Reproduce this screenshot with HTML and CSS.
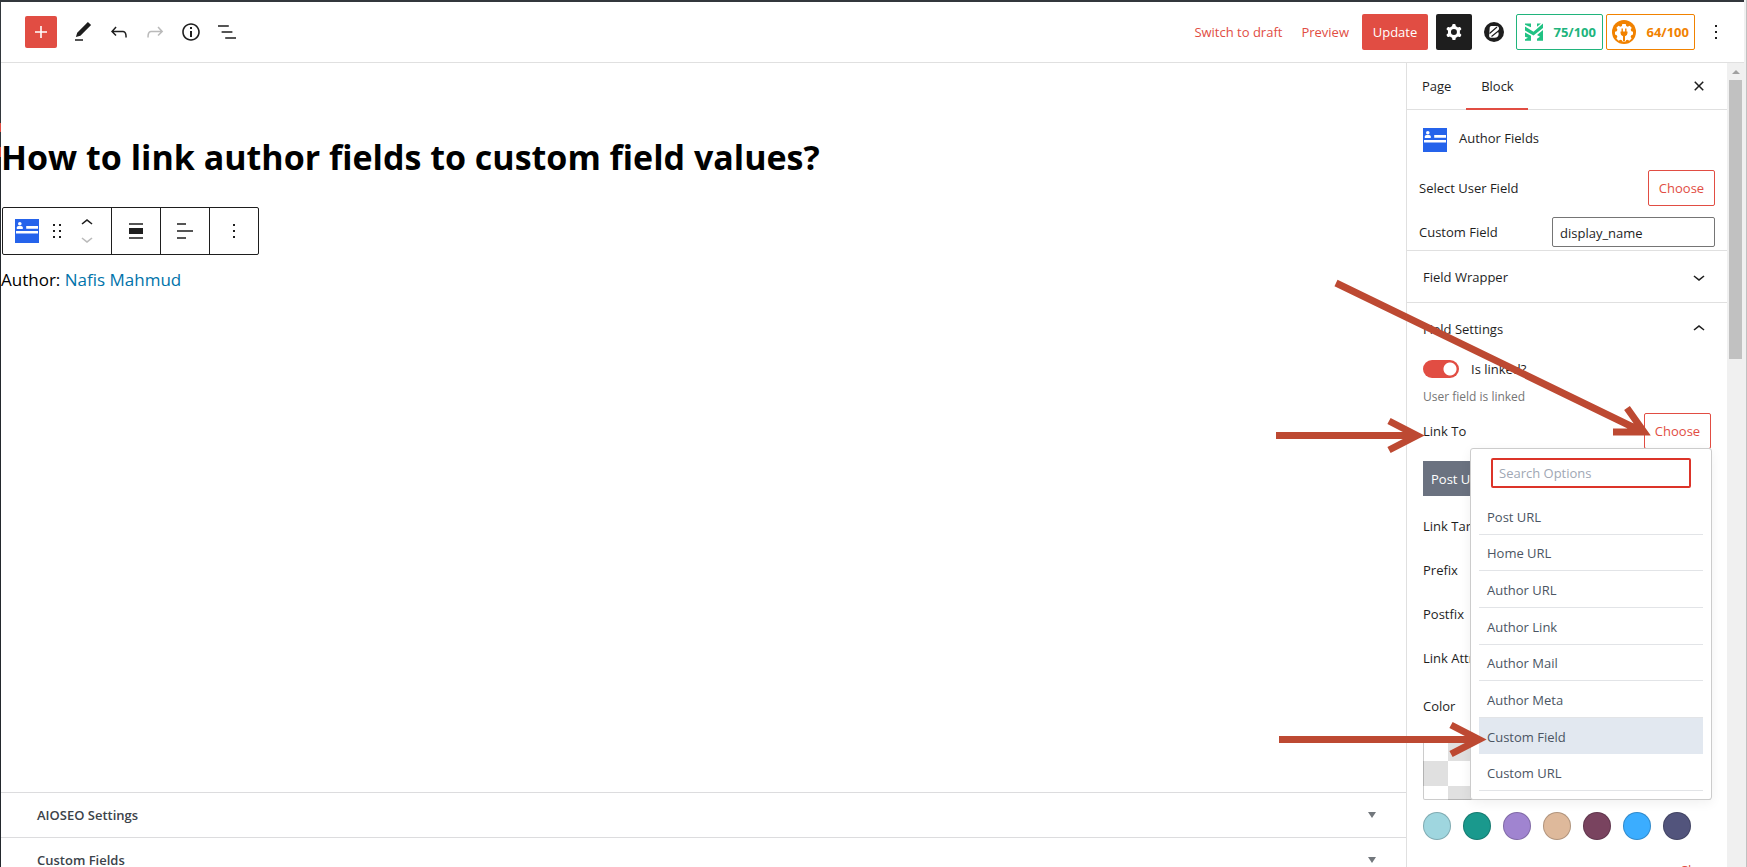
FILE: index.html
```html
<!DOCTYPE html>
<html lang="en">
<head>
<meta charset="utf-8">
<title>Edit Page</title>
<link rel="stylesheet" href="styles.css">
</head>
<body>
<svg class="defs" aria-hidden="true">
  <symbol id="more" viewBox="0 0 24 24"><path d="M13 19h-2v-2h2v2zm0-6h-2v-2h2v2zm0-6h-2V5h2v2z"/></symbol>
  <symbol id="up" viewBox="0 0 24 24"><path d="M6.5 12.4L12 8l5.5 4.4-.9 1.2L12 10l-4.5 3.6-1-1.2z"/></symbol>
  <symbol id="down" viewBox="0 0 24 24"><path d="M17.5 11.6L12 16l-5.5-4.4.9-1.2L12 14l4.5-3.6 1 1.2z"/></symbol>
  <symbol id="author" viewBox="0 0 24 24">
    <path fill="#2563eb" d="M0 0h24v24H0z"/>
    <g fill="#fff"><circle cx="4.8" cy="4.8" r="1.8"/><path d="M1.8 10V8.600q0-1.600 1.600-1.600h2.800q1.600 0 1.600 1.600V10z"/><path d="M11.200 7H23v2.800H11.200zM1 11.900h22v2.500H1z"/></g>
  </symbol>
</svg>
<div class="app">
  <div class="edge"></div>
  <div class="editor">
    <header class="topbar">
      <div class="tools">
        <button class="add" aria-label="Add block"><svg viewBox="0 0 24 24"><path d="M18 11.200h-5.200V6h-1.600v5.200H6v1.600h5.200V18h1.600v-5.200H18z"/></svg></button>
        <button class="tool" aria-label="Tools"><svg viewBox="0 0 24 24"><path d="M20.100 5.100L16.900 2 6.200 12.700l-1.300 4.400 4.500-1.300L20.100 5.100zM4 20.800h8v-1.500H4v1.500z"/></svg></button>
        <button class="tool" aria-label="Undo"><svg viewBox="0 0 24 24"><path d="M18.300 11.700c-.6-.6-1.400-.9-2.300-.9H6.700l2.900-3.300-1.100-1-4.500 5L8.500 16l1-1-2.700-2.700H16c.5 0 .9.2 1.300.5 1 1 1 3.400 1 4.500v.3h1.500v-.2c0-1.500 0-4.300-1.500-5.700z"/></svg></button>
        <button class="tool faded" aria-label="Redo" disabled><svg viewBox="0 0 24 24"><path d="M15.600 6.500l-1.100 1 2.900 3.300H8c-.9 0-1.700.3-2.300.9-1.400 1.500-1.400 4.200-1.400 5.600v.2h1.500v-.3c0-1.100 0-3.500 1-4.500.3-.3.7-.5 1.300-.5h9.200L14.500 15l1.100 1.100 4.600-4.600-4.600-5z"/></svg></button>
        <button class="tool" aria-label="Details"><svg viewBox="0 0 24 24"><path d="M12 3.200c-4.800 0-8.800 3.900-8.800 8.800 0 4.800 3.900 8.800 8.800 8.800 4.800 0 8.800-3.900 8.800-8.800 0-4.800-4-8.800-8.800-8.800zm0 16c-4 0-7.200-3.300-7.200-7.200C4.800 8 8 4.800 12 4.800s7.200 3.300 7.200 7.200c0 4-3.200 7.200-7.200 7.200zM11 17h2v-6h-2v6zm0-8h2V7h-2v2z"/></svg></button>
        <button class="tool" aria-label="List view"><svg viewBox="0 0 24 24"><path d="M13.800 5.200H3v1.500h10.800V5.200zm-3.600 12v1.500H21v-1.500H10.200zm7.200-6H6.600v1.500h10.800v-1.500z"/></svg></button>
      </div>
      <div class="actions">
        <button class="plain">Switch to draft</button>
        <button class="plain">Preview</button>
        <button class="update">Update</button>
        <button class="gear" aria-label="Settings"><svg viewBox="0 0 24 24"><path fill-rule="evenodd" d="M10.289 4.836A1 1 0 0111.275 4h1.306a1 1 0 01.987.836l.244 1.466c.787.26 1.503.679 2.108 1.218l1.393-.522a1 1 0 011.216.437l.653 1.130a1 1 0 01-.23 1.273l-1.148.944a6.025 6.025 0 010 2.435l1.149.946a1 1 0 01.23 1.272l-.653 1.130a1 1 0 01-1.216.437l-1.394-.522c-.605.54-1.320.958-2.108 1.218l-.244 1.466a1 1 0 01-.987.836h-1.306a1 1 0 01-.986-.836l-.244-1.466a5.995 5.995 0 01-2.108-1.218l-1.394.522a1 1 0 01-1.217-.436l-.653-1.131a1 1 0 01.23-1.272l1.149-.946a6.026 6.026 0 010-2.435l-1.148-.944a1 1 0 01-.23-1.272l.653-1.131a1 1 0 011.217-.437l1.393.522a5.994 5.994 0 012.108-1.218l.244-1.466zM14.929 12a3 3 0 11-6 0 3 3 0 016 0z"/></svg></button>
        <button class="blocks" aria-label="Blocks plugin"><svg viewBox="0 0 20 20"><circle cx="10" cy="10" r="10" fill="#1e1e1e"/><path fill="#fff" d="M7.300 4h5q2.900 0 2.700 2.700-.1 1.900-1.500 2.700 1.300.7 1.200 2.300-.2 4.100-4.200 4.100H6.700q-1.700 0-1.600-1.700L5.700 5.600Q5.900 4 7.300 4z"/><path fill="none" stroke="#1e1e1e" stroke-width="1.200" d="M5.500 11.500L13 5M7.500 14.500L15 8.500"/></svg></button>
        <button class="score green"><svg viewBox="0 0 18 18"><path fill="#20c283" d="M0 .5h6v3.700L0 1.800zM0 3.500l8.500 5.300L18 .5V5L8.500 12.500 0 7.500zM12 .5h4L12 3.800zM0 9.500l6 3.200v5H0v-1.500l3-1.500-3-1zM12 12l6-5v10.700h-6v-2l3-2z"/></svg>75/100</button>
        <button class="score orange"><svg viewBox="0 0 24 24"><circle cx="12" cy="12" r="12" fill="#f18200"/><path fill="#fff" d="M10.300 4h3.400l.5 2 1.500.7 1.900-1 2.100 2.100-1 1.900.7 1.500 1.600.6v2.600l-1.700.8-.7 1.500 1 1.900-2.200 2.100-1.900-1-1.500.6-.4 1.200h-3.200l-.5-1.200-1.500-.6-1.900 1-2.100-2.100 1-1.900-.7-1.500-1.700-.8v-2.600l1.700-.6.7-1.500-1-1.900 2.100-2.100 1.900 1 1.500-.7z"/><path fill="#f18200" d="M9.500 8.500h1.400v3h2.200v-3h1.400v3h1v1.500q0 2.600-2.500 3.200V21h-2v-4.800Q8.500 15.600 8.500 13v-1.500h1z"/></svg>64/100</button>
        <button class="options" aria-label="Options"><svg><use href="#more"/></svg></button>
      </div>
    </header>
    <div class="body">
      <main class="canvas">
        <h1 class="title">How to link author fields to custom field values?</h1>
        <div class="toolbar">
          <div class="group first">
            <button aria-label="Author Fields"><svg><use href="#author"/></svg></button>
            <button class="drag" aria-label="Drag"><svg viewBox="0 0 24 24"><path d="M8 7h2V5H8v2zm0 6h2v-2H8v2zm0 6h2v-2H8v2zm6-14v2h2V5h-2zm0 8h2v-2h-2v2zm0 6h2v-2h-2v2z"/></svg></button>
            <div class="movers">
              <button aria-label="Move up"><svg><use href="#up"/></svg></button>
              <button class="faded" aria-label="Move down" disabled><svg><use href="#down"/></svg></button>
            </div>
          </div>
          <div class="group"><button aria-label="Align"><svg viewBox="0 0 24 24"><path d="M5 9h14v6H5z"/><path fill="#555" d="M5 4h14v2H5zM5 18h14v2H5z"/></svg></button></div>
          <div class="group"><button aria-label="Align text"><svg viewBox="0 0 24 24"><path fill="#555" d="M4 4h9v2H4zM4 11h16v2H4zM4 18h9v2H4z"/></svg></button></div>
          <div class="group"><button aria-label="Options"><svg><use href="#more"/></svg></button></div>
        </div>
        <p class="byline">Author: <a href="#">Nafis Mahmud</a></p>
        <section class="meta">
          <button>AIOSEO Settings<i class="caret"></i></button>
          <button>Custom Fields<i class="caret"></i></button>
        </section>
      </main>
      <aside class="sidebar">
        <nav class="tabs">
          <button>Page</button>
          <button class="active">Block</button>
          <button class="close" aria-label="Close settings"><svg viewBox="0 0 24 24"><path d="M12 13.060l3.712 3.713 1.061-1.060L13.061 12l3.712-3.712-1.060-1.060L12 10.938 8.288 7.227l-1.061 1.060L10.939 12l-3.712 3.712 1.060 1.061L12 13.061z"/></svg></button>
        </nav>
        <div class="card"><svg><use href="#author"/></svg><h2>Author Fields</h2></div>
        <div class="source">
          <div class="row user"><span>Select User Field</span><button class="choose">Choose</button></div>
          <div class="row"><label for="cf">Custom Field</label><input class="text" id="cf" value="display_name"></div>
        </div>
        <button class="panel-head">Field Wrapper<svg><use href="#down"/></svg></button>
        <button class="panel-head">Field Settings<svg><use href="#up"/></svg></button>
        <div class="panel">
          <div class="switch"><input type="checkbox" id="linked" checked><label for="linked">Is linked?</label></div>
          <p class="help">User field is linked</p>
          <div class="row link-to">
            <span>Link To</span><button class="choose">Choose</button>
            <div class="popover">
              <input class="search" placeholder="Search Options" aria-label="Search Options">
              <div class="options-list">
                <button>Post URL</button>
                <button>Home URL</button>
                <button>Author URL</button>
                <button>Author Link</button>
                <button>Author Mail</button>
                <button>Author Meta</button>
                <button class="hover">Custom Field</button>
                <button>Custom URL</button>
              </div>
            </div>
          </div>
          <div class="chip">Post URL</div>
          <div class="row field"><label for="target">Link Target</label><select class="text" id="target"></select></div>
          <div class="row field"><label for="prefix">Prefix</label><input class="text" id="prefix"></div>
          <div class="row field"><label for="postfix">Postfix</label><input class="text" id="postfix"></div>
          <div class="row field"><label for="attrs">Link Attributes</label><input class="text" id="attrs"></div>
          <div class="row color">Color</div>
          <button class="checker" aria-label="Custom color"></button>
          <div class="swatches">
            <button class="c1" aria-label="Light blue"></button>
            <button class="c2" aria-label="Teal"></button>
            <button class="c3" aria-label="Purple"></button>
            <button class="c4" aria-label="Tan"></button>
            <button class="c5" aria-label="Plum"></button>
            <button class="c6" aria-label="Sky blue"></button>
            <button class="c7" aria-label="Indigo"></button>
          </div>
          <button class="clear">Clear</button>
        </div>
      </aside>
      <div class="scroll"><i class="arrow"></i><i class="thumb"></i></div>
    </div>
  </div>
  <div class="outer-scroll"></div>
  <svg class="arrows" viewBox="0 0 480 520" aria-hidden="true">
    <g fill="none" stroke="#bd4932" stroke-width="7">
      <path d="M69 33L376 182M360 158L377 182H346"/>
      <path d="M9 185.500H149M122 171L150 185.500L122 200"/>
      <path d="M12 489.500H211M184 475L212 489.500L184 504"/>
    </g>
  </svg>
</div>
</body>
</html>
```
FILE: styles.css
```css
* { box-sizing: border-box; }
body {
  margin: 0;
  overflow: hidden;
  background: #fff;
  color: #1e1e1e;
  font: 13px/20px "Open Sans", "Noto Sans", sans-serif;
}
button, input, select { font: inherit; color: inherit; }
button { margin: 0; padding: 0; border: 0; background: none; cursor: pointer; }
svg { display: block; width: 24px; height: 24px; fill: currentColor; flex: none; }
.defs { display: none; }
h1, h2, p { margin: 0; }

.app {
  position: relative;
  display: flex;
  height: 100vh;
  overflow: hidden;
}
.app::before {
  content: "";
  position: absolute;
  inset: 0 3px auto 0;
  height: 2px;
  background: #32373c;
}
.edge {
  width: 1px;
  background: linear-gradient(#32373c 123px, #e14d43 123px, #e14d43 132px, #32373c 132px, #32373c 147px, #e14d43 147px, #e14d43 157px, #23282d 157px);
}
.editor { flex: 1; min-width: 0; display: flex; flex-direction: column; padding-top: 2px; }
.outer-scroll { width: 3px; background: #f0f0f0; border-right: 1px solid #c1c1c1; }

.topbar {
  display: flex;
  justify-content: space-between;
  align-items: center;
  flex: none;
  height: 61px;
  padding: 0 16px 0 24px;
  border-bottom: 1px solid #e0e0e0;
}
.tools { display: flex; align-items: center; gap: 12px; }
.add { width: 32px; height: 32px; margin-right: 2px; padding: 4px; border-radius: 2px; background: #e14d43; color: #fff; }
.faded { opacity: .3; }
.actions { display: flex; align-items: center; height: 36px; }
.plain { color: #e14d43; margin-right: 19px; }
.update { width: 66px; height: 36px; margin: 0 8px 0 -6px; border-radius: 2px; background: #e14d43; color: #fff; }
.gear { width: 36px; height: 36px; padding: 6px; border-radius: 2px; background: #1e1e1e; color: #fff; }
.blocks { margin: 0 12px; }
.blocks svg { width: 20px; height: 20px; }
.score {
  display: flex;
  align-items: center;
  justify-content: space-between;
  height: 36px;
  border: 1px solid;
  border-radius: 2px;
  font-weight: 700;
}
.green { width: 87px; padding: 0 6px 0 8px; color: #20b47c; }
.green svg { width: 18px; height: 18px; }
.orange { width: 89px; margin-left: 3px; padding: 0 5px; color: #f18200; }
.options { margin-left: 9px; }

.body { flex: 1; min-height: 0; display: flex; }
.canvas { flex: 1; min-width: 0; display: flex; flex-direction: column; padding-top: 68px; }
.title { font-size: 34px; line-height: 52px; font-weight: 700; color: #000; white-space: nowrap; }
.toolbar {
  display: flex;
  align-self: flex-start;
  height: 48px;
  margin: 24px 0 0 1px;
  border: 1px solid #1e1e1e;
  border-radius: 2px;
}
.group { display: flex; align-items: center; justify-content: center; width: 49px; border-left: 1px solid #1e1e1e; }
.group.first { width: 108px; border: 0; }
.drag { margin-left: 6px; }
.movers { margin-left: 6px; }
.movers button { display: block; height: 16px; }
.movers svg { margin-top: -4px; }
.byline { margin-top: 10px; font-size: 17px; line-height: 30px; color: #000; }
.byline a { color: #0073aa; text-decoration: none; }
.meta { margin-top: auto; height: 75px; overflow: hidden; }
.meta button {
  display: flex;
  align-items: center;
  justify-content: space-between;
  width: 100%;
  height: 45px;
  padding: 0 30px 0 36px;
  border-top: 1px solid #dcdcde;
  color: #3c434a;
  font-weight: 600;
}
.caret { border: 4px solid transparent; border-top: 6px solid #72777c; border-bottom: 0; }

.sidebar { width: 321px; overflow: hidden; border-left: 1px solid #e0e0e0; }
.tabs { display: flex; height: 47px; border-bottom: 1px solid #e0e0e0; }
.tabs button { padding: 0 15px 2px; height: 47px; font-weight: 500; }
.tabs .active { border-bottom: 2px solid #e14d43; width: 62px; padding: 0; }
.tabs .close { margin-left: auto; padding: 0 16px 2px; }
.card { display: flex; gap: 12px; padding: 18px 16px 0; }
.card h2 { font-size: 13px; font-weight: 500; }
.source { padding: 18px 12px 3px; }
.row { position: relative; display: flex; align-items: center; justify-content: space-between; }
.user { margin-bottom: 11px; }
.choose { width: 67px; height: 36px; border: 1px solid #e14d43; border-radius: 2px; background: #fff; color: #e14d43; }
.text { width: 163px; height: 30px; padding: 2px 7px 0; border: 1px solid #757575; border-radius: 2px; background: #fff; }
.panel-head {
  display: flex;
  align-items: center;
  justify-content: space-between;
  width: 100%;
  height: 52px;
  padding: 0 16px;
  border-top: 1px solid #e0e0e0;
  font-weight: 500;
}
.panel { padding: 5px 16px 0; }
.switch { display: flex; align-items: center; gap: 12px; }
.switch input {
  appearance: none;
  width: 36px;
  height: 18px;
  margin: 0;
  border-radius: 9px;
  background: radial-gradient(circle at 27px 9px, #fff 6px, #e14d43 7px);
}
.help { margin: 8px 0 6px; font-size: 12px; color: #757575; }
.popover {
  position: absolute;
  top: 35px;
  right: -1px;
  z-index: 1;
  width: 242px;
  padding: 9px 8px 8px;
  border: 1px solid #ccc;
  border-radius: 3px;
  background: #fff;
  box-shadow: 0 3px 12px rgba(0, 0, 0, .06);
}
.search {
  display: block;
  width: 200px;
  height: 30px;
  margin: 0 12px 10px;
  padding: 0 6px;
  border: 2px solid #dc3429;
  border-radius: 2px;
}
.search::placeholder { color: #a0a7b4; }
.options-list { display: grid; grid-template-rows: repeat(8, 1fr); height: 293px; }
.options-list button { padding: 2px 8px 0; border-bottom: 1px solid #e2e4e7; text-align: left; color: #4b5563; }
.options-list .hover { background: #e2e8f0; border-color: #e2e8f0; }
.chip { width: 100px; height: 35px; margin: 12px 0 15px; padding: 0 8px; line-height: 37px; background: #6b7280; color: #fff; }
.field { height: 30px; margin-bottom: 14px; }
.field label { white-space: nowrap; }
.color { height: 20px; margin-top: 23px; }
.checker {
  display: block;
  width: 100%;
  height: 64px;
  margin: 20px 0 12px;
  border: 1px solid rgba(0, 0, 0, .2);
  border-radius: 2px;
  background: repeating-conic-gradient(#e0e0e0 0 25%, #fff 0 50%) 0 0 / 50px 50px border-box;
}
.swatches { display: flex; gap: 12px; }
.swatches button { width: 28px; height: 28px; border: 1px solid rgba(0, 0, 0, .2); border-radius: 50%; }
.c1 { background: #9fd6df; }
.c2 { background: #1a998d; }
.c3 { background: #a084d0; }
.c4 { background: #deb99b; }
.c5 { background: #79435f; }
.c6 { background: #3badff; }
.c7 { background: #52547c; }
.clear { display: block; margin: 20px 0 0 auto; color: #e14d43; }

.scroll { display: flex; flex-direction: column; align-items: center; width: 17px; background: #f0f0f0; }
.scroll .arrow { margin: 7px 0 6px; border: 4px solid transparent; border-top: 0; border-bottom: 4px solid #a0a0a0; }
.scroll .thumb { width: 13px; height: 279px; background: #c1c1c1; }

.arrows { position: absolute; top: 250px; right: 0; z-index: 2; width: 480px; height: 520px; pointer-events: none; }
```
